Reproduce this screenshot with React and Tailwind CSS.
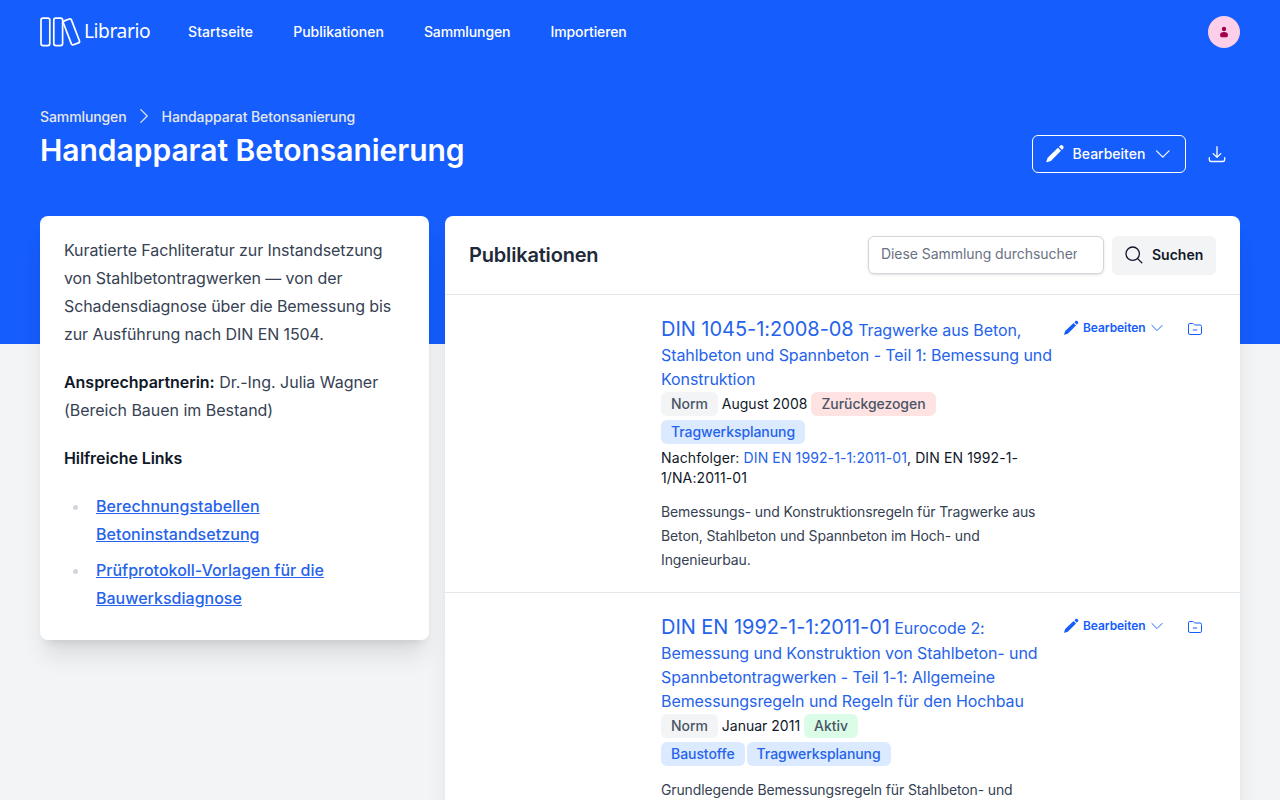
function Icon({ className, children, width = 1.2 }) {
  return (
    <svg className={className} viewBox="0 0 20 20" fill="none" stroke="currentColor" strokeWidth={width} strokeLinecap="round" strokeLinejoin="round">
      {children}
    </svg>
  );
}

function Logo() {
  return (
    <svg className="h-8 w-28" viewBox="0 0 112 32" fill="none" stroke="white" strokeWidth="1.7">
      <rect x="1" y="2.2" width="8.8" height="27.4" rx="2" />
      <rect x="13.8" y="2.2" width="8.8" height="27.4" rx="2" />
      <rect x="-4.3" y="-12.8" width="8.6" height="25.6" rx="1.6" transform="translate(31.4 15.9) rotate(-21)" />
      <text x="44" y="22.3" fill="white" stroke="none" fontFamily="'Noto Sans', 'Open Sans', sans-serif" fontSize="19.2" textLength="66.5">Librario</text>
    </svg>
  );
}

function PencilIcon({ className }) {
  return (
    <svg className={className} viewBox="0 0 20 20" fill="currentColor">
      <path d="M13.2 3.7l3.1 3.1L6 17.1l-4.3 1.4c-.3.1-.5-.1-.4-.4L2.7 13.9z" />
      <path d="M14.2 2.7l1.2-1.2c.8-.8 2-.8 2.7 0l.4.4c.7.7.7 1.9 0 2.7l-1.2 1.2z" />
    </svg>
  );
}

function ChevronDown({ className }) {
  return <Icon className={className}><path d="M3.6 6.8l6.400 6.400 6.400-6.400" /></Icon>;
}

function DownloadIcon() {
  return (
    <Icon className="size-5" width={1.3}>
      <path d="M10 2.6v10.6M6.2 9.6l3.8 3.8 3.8-3.8M2.3 13.6v2a1.9 1.9 0 0 0 1.9 1.9h11.6a1.9 1.9 0 0 0 1.9-1.9v-2" />
    </Icon>
  );
}

function FolderIcon() {
  return (
    <svg className="size-4" viewBox="0 0 16 16" fill="none" stroke="currentColor" strokeWidth="1" strokeLinecap="round" strokeLinejoin="round">
      <path d="M1.5 12.1V3.9A1.4 1.4 0 0 1 2.9 2.5h2.6c.4 0 .7.1 1 .4l.8.7c.3.2.6.4 1 .4h4.8a1.4 1.4 0 0 1 1.4 1.4v6.7a1.4 1.4 0 0 1-1.4 1.4H2.9a1.4 1.4 0 0 1-1.4-1.4zM6.2 9h3.6" />
    </svg>
  );
}

function Badge({ className, children }) {
  return <span className={`rounded-md px-2.5 py-0.5 text-sm leading-5 font-medium inline-block tracking-[-0.06px] ${className}`}>{children}</span>;
}

function Publication({ code, title, date, status, statusClass, tags, children, abstract }) {
  return (
    <li className="flex border-b border-gray-200 px-6 py-5">
      <div className="w-48 shrink-0" />
      <div className="w-[402px] shrink-0 pr-2">
        <div className="mb-px text-base tracking-[-0.08px] text-[#2563eb]">
          <a href="#"><span className="text-xl tracking-[-0.04px]">{code}</span> {title}</a>
        </div>
        <div className="flex items-center gap-1 text-sm">
          <Badge className="bg-gray-100 text-gray-600">Norm</Badge>
          <span>{date}</span>
          <Badge className={statusClass}>{status}</Badge>
        </div>
        <div className="mt-1 flex gap-0.5">
          {tags.map((t) => <Badge key={t} className="bg-blue-100 text-[#2563eb]">{t}</Badge>)}
        </div>
        {children}
        <p className="mt-3 text-sm leading-6 tracking-[-0.13px] text-gray-700">{abstract}</p>
      </div>
      <div className="mt-px flex h-6 items-center text-blue-600">
        <button className="flex items-center text-xs font-semibold tracking-[-0.08px]">
          <PencilIcon className="mr-1 size-4" />
          Bearbeiten
          <ChevronDown className="ml-1 size-4" />
        </button>
        <button className="mt-0.5 ml-[22px]"><FolderIcon /></button>
      </div>
    </li>
  );
}

export default function App() {
  return (
    <div className="h-[800px] overflow-hidden bg-gray-100 font-['Inter',sans-serif] text-gray-900">
      <div className="h-[344px] bg-blue-600 px-10 text-white">
        <nav className="flex h-16 items-center">
          <Logo />
          <div className="ml-9 flex flex-1 gap-10 text-sm font-medium">
            <a href="#" className="tracking-[0.09px]">Startseite</a>
            <a href="#">Publikationen</a>
            <a href="#" className="tracking-[-0.1px]">Sammlungen</a>
            <a href="#" className="tracking-[-0.1px]">Importieren</a>
          </div>
          <div className="flex size-8 items-center justify-center rounded-full bg-pink-200 text-pink-800">
            <svg className="size-3" viewBox="0 0 12 12" fill="currentColor">
              <circle cx="6" cy="3" r="2.2" />
              <path d="M2 8.9C2 7 3.500 5.900 6 5.900s4 1.100 4 3c0 1.500-1 2.300-2 2.300H4c-1 0-2-.8-2-2.300z" />
            </svg>
          </div>
        </nav>
        <header className="flex justify-between pt-10">
          <div>
            <div className="flex h-6 items-center pt-0.5 text-sm font-medium tracking-[-0.1px] text-gray-200">
              <a href="#">Sammlungen</a>
              <Icon className="mr-2 ml-[7px] -mt-0.5 size-5"><path d="M6.800 3.600l6.400 6.400-6.400 6.400" /></Icon>
              <a href="#">Handapparat Betonsanierung</a>
            </div>
            <h1 className="mt-1 text-3xl leading-9 font-semibold tracking-[-0.03px]">Handapparat Betonsanierung</h1>
          </div>
          <div className="mt-[31px] flex h-[38px] items-center">
            <button className="flex h-full w-[154px] items-center rounded-md border border-white px-3 text-sm font-medium">
              <PencilIcon className="mr-2 size-5" />
              Bearbeiten
              <ChevronDown className="ml-2 size-5" />
            </button>
            <button className="mr-[13px] ml-[21px]"><DownloadIcon /></button>
          </div>
        </header>
      </div>

      <main className="-mt-32 flex items-start gap-4 px-10">
        <aside className="h-[424px] w-[389px] shrink-0 rounded-lg bg-white px-6 pt-5 leading-7 text-gray-700 shadow-xl">
          <p className="tracking-[-0.09px]">Kuratierte Fachliteratur zur Instandsetzung von Stahlbetontragwerken — von der Schadensdiagnose über die Bemessung bis zur Ausführung nach DIN EN 1504.</p>
          <p className="mt-5 tracking-[-0.03px]"><strong className="font-semibold text-gray-900">Ansprechpartnerin:</strong> Dr.-Ing. Julia Wagner (Bereich Bauen im Bestand)</p>
          <p className="mt-5"><strong className="font-semibold tracking-[-0.1px] text-gray-900">Hilfreiche Links</strong></p>
          <ul className="mt-5 list-disc space-y-2 pl-[26px] marker:text-gray-300">
            <li className="pl-1.5"><a href="#" className="font-medium tracking-[0.06px] text-[#2563eb] underline">Berechnungstabellen Betoninstandsetzung</a></li>
            <li className="pl-1.5"><a href="#" className="font-medium text-[#2563eb] underline">Prüfprotokoll-Vorlagen für die Bauwerksdiagnose</a></li>
          </ul>
        </aside>

        <section className="w-[795px] shrink-0 rounded-lg bg-white shadow-xl">
          <div className="flex h-[79px] items-center justify-between border-b border-gray-200 px-6">
            <h2 className="text-xl font-semibold tracking-[-0.18px] text-gray-800">Publikationen</h2>
            <div className="flex gap-2">
              <input className="h-[38px] w-[236px] rounded-md border border-gray-300 pr-[26px] pb-0.5 pl-3 text-sm tracking-[-0.06px] shadow-sm placeholder:text-gray-500" placeholder="Diese Sammlung durchsuchen" />
              <button className="flex h-[39px] w-[104px] items-center rounded-md bg-gray-100 px-3 text-sm font-semibold">
                <Icon className="mr-2 size-5" width={1.3}>
                  <circle cx="8.700" cy="8.700" r="6.700" />
                  <path d="M13.600 13.600l4.200 4.200" />
                </Icon>
                Suchen
              </button>
            </div>
          </div>
          <ul>
            <Publication
              code="DIN 1045-1:2008-08"
              title="Tragwerke aus Beton, Stahlbeton und Spannbeton - Teil 1: Bemessung und Konstruktion"
              date="August 2008"
              status="Zurückgezogen"
              statusClass="bg-red-100 text-gray-600"
              tags={['Tragwerksplanung']}
              abstract="Bemessungs- und Konstruktionsregeln für Tragwerke aus Beton, Stahlbeton und Spannbeton im Hoch- und Ingenieurbau."
            >
              <p className="mt-1 text-sm tracking-[0.11px]">Nachfolger: <a href="#" className="text-[#2563eb]">DIN EN 1992-1-1:2011-01</a>, DIN EN 1992-1-1/NA:2011-01</p>
            </Publication>
            <Publication
              code="DIN EN 1992-1-1:2011-01"
              title="Eurocode 2: Bemessung und Konstruktion von Stahlbeton- und Spannbetontragwerken - Teil 1-1: Allgemeine Bemessungsregeln und Regeln für den Hochbau"
              date="Januar 2011"
              status="Aktiv"
              statusClass="bg-green-100 text-gray-600"
              tags={['Baustoffe', 'Tragwerksplanung']}
              abstract="Grundlegende Bemessungsregeln für Stahlbeton- und Spannbetontragwerke im Hochbau."
            />
          </ul>
        </section>
      </main>
    </div>
  );
}
